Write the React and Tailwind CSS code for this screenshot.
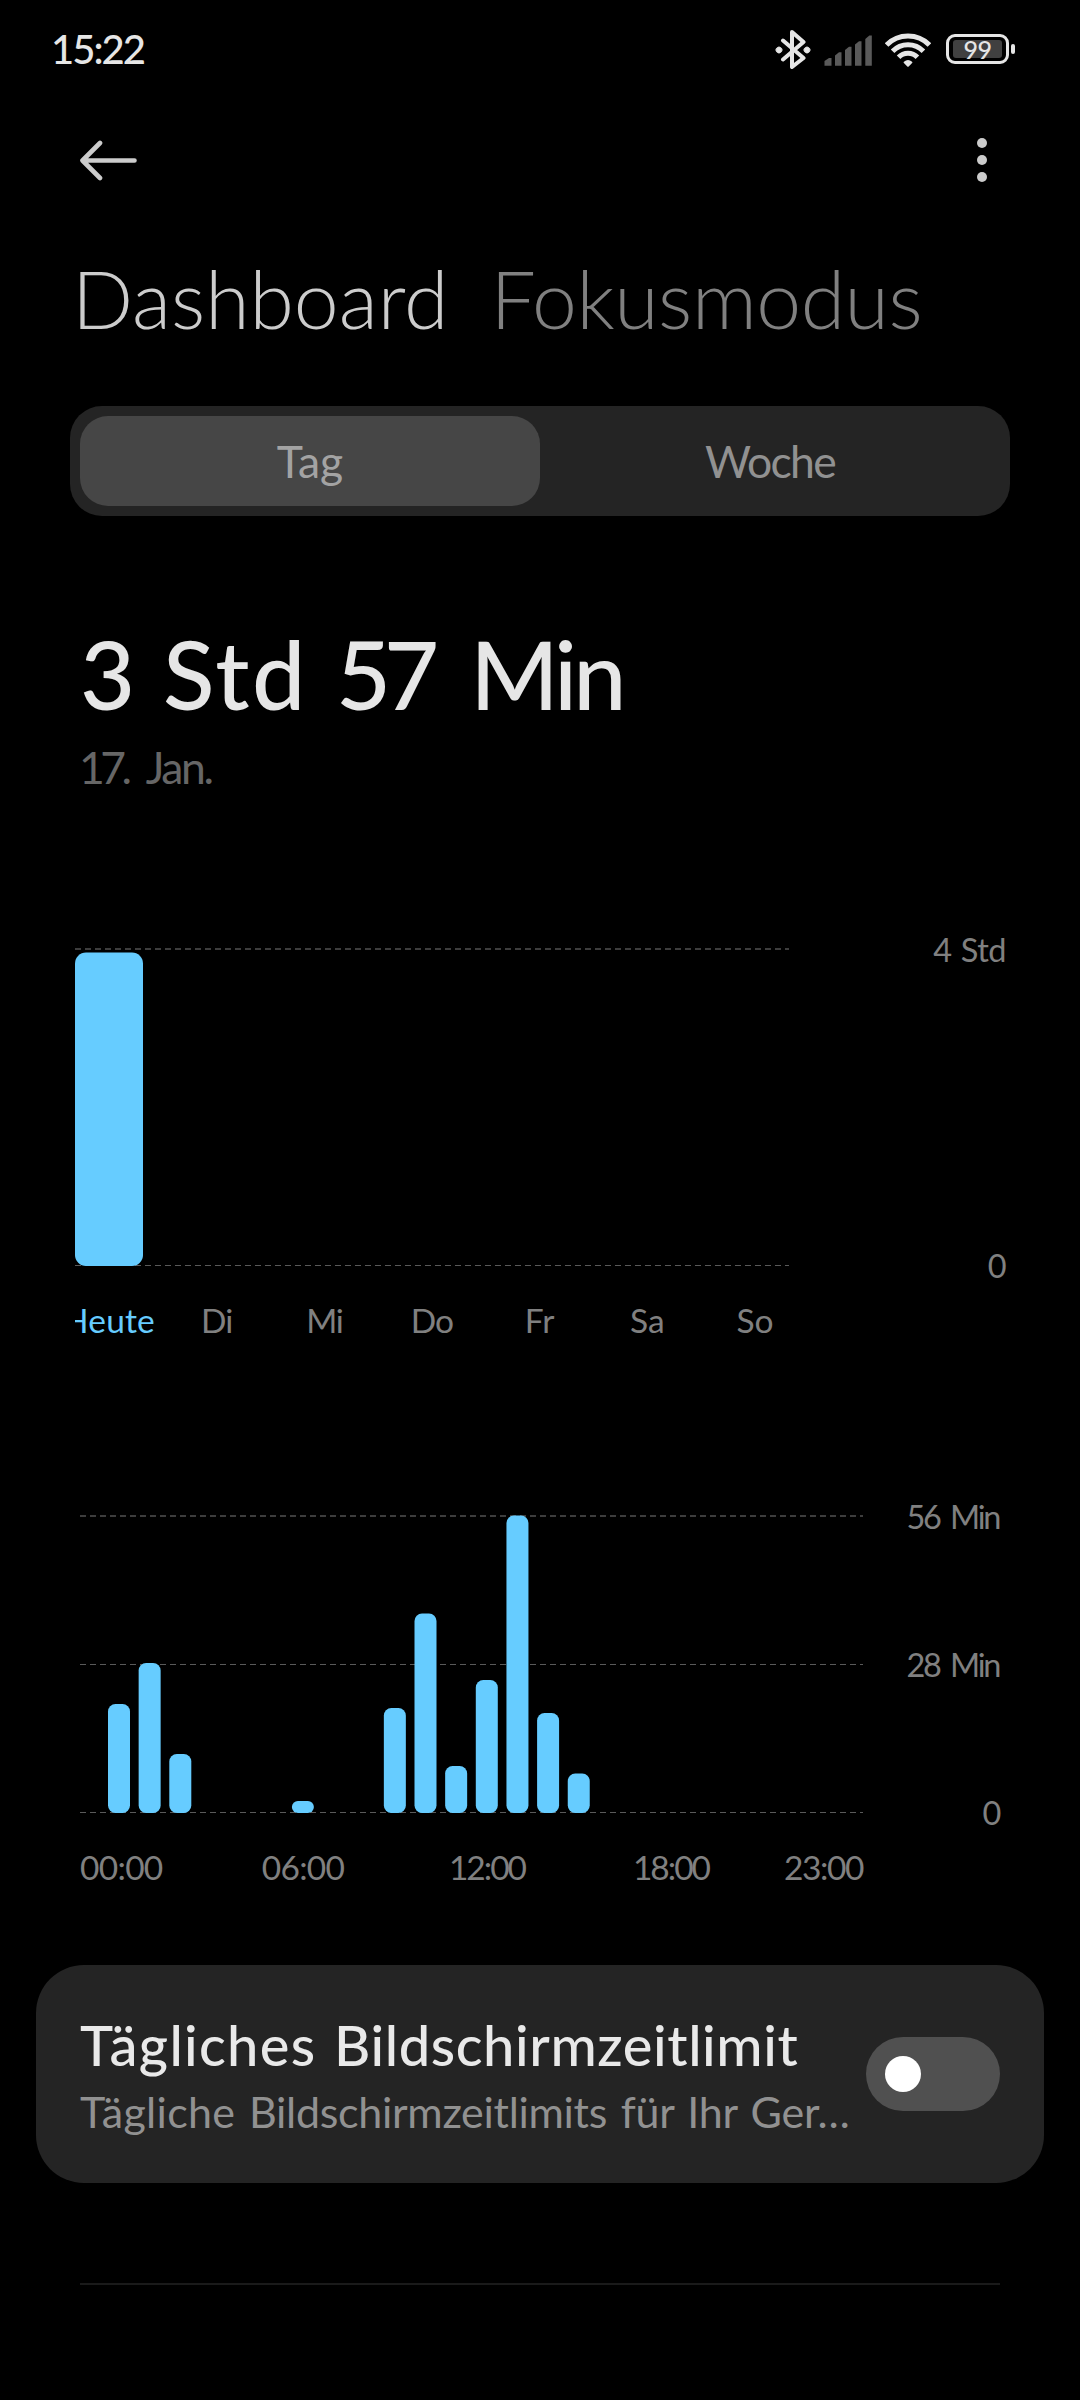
const days = [
  { label: 'Heute', className: 'text-[#66ccff] tracking-[0.16px]' },
  { label: 'Di', className: 'text-[#808080] tracking-[-1px]' },
  { label: 'Mi', className: 'text-[#808080] tracking-[-1.5px]' },
  { label: 'Do', className: 'text-[#808080] tracking-[-1px]' },
  { label: 'Fr', className: 'text-[#808080]' },
  { label: 'Sa', className: 'text-[#808080]' },
  { label: 'So', className: 'text-[#808080]' },
];

// height in px per hour of the day
const hours = [
  { hour: 0, height: 109 },
  { hour: 1, height: 150 },
  { hour: 2, height: 59 },
  { hour: 6, height: 12 },
  { hour: 9, height: 105 },
  { hour: 10, height: 199.5 },
  { hour: 11, height: 47 },
  { hour: 12, height: 133 },
  { hour: 13, height: 297.5 },
  { hour: 14, height: 100 },
  { hour: 15, height: 39.5 },
];

const BluetoothIcon = () => (
  <svg className="h-[40px] w-[36px]" viewBox="0 0 36 40" fill="none">
    <path
      d="M8 11.5 L28.5 29 L17 38 V3 L28.5 13 L8 30.5"
      stroke="#e6e6e6"
      strokeWidth="4"
      strokeLinecap="round"
      strokeLinejoin="round"
    />
    <rect x="1.4" y="18.4" width="5.2" height="5.2" rx="1.8" transform="rotate(45 4 21)" fill="#e6e6e6" stroke="#e6e6e6" />
    <rect x="29.4" y="18.4" width="5.2" height="5.2" rx="1.8" transform="rotate(45 32 21)" fill="#e6e6e6" stroke="#e6e6e6" />
  </svg>
);

const SignalIcon = () => (
  <svg className="h-[40px] w-[48px]" viewBox="0 0 48 40" fill="#5a5a5a">
    <path d="M0.5 32 L5 29 H7.5 V36.7 H0.5 Z" />
    <path d="M11 26.5 L15 23.3 H17.5 V36.7 H11 Z" />
    <path d="M21 21 L25 17.8 H27.5 V36.7 H21 Z" />
    <path d="M31 15.5 L35 12.2 H37.5 V36.7 H31 Z" />
    <path d="M41.3 10 L45.3 6.5 H47.8 V36.7 H41.3 Z" />
  </svg>
);

const WifiIcon = () => (
  <svg className="h-[40px] w-[46px]" viewBox="0 0 46 40" fill="none">
    <g stroke="#e6e6e6" strokeWidth="5">
      <path d="M1.6 16 A30 30 0 0 1 44.4 16" />
      <path d="M7.6 22.2 A21.5 21.5 0 0 1 38.4 22.2" />
      <path d="M13.6 28.2 A13 13 0 0 1 32.4 28.2" />
    </g>
    <path
      d="M19.6 33.4 Q23 30.6 26.4 33.4 L23 36.8 Z"
      fill="#e6e6e6"
      stroke="#e6e6e6"
      strokeWidth="2"
      strokeLinejoin="round"
    />
  </svg>
);

const Battery = () => (
  <div className="flex items-center gap-[2px]">
    <div className="flex h-[30px] w-[63px] items-center justify-center rounded-[9px] border-[3px] border-[#e6e6e6]">
      <div className="flex h-[18px] w-[49px] items-center justify-center rounded-[3px] bg-[#404040] text-[25px] leading-[18px] font-medium tracking-[-0.5px] text-[#e6e6e6]">
        99
      </div>
    </div>
    <div className="h-[10px] w-[4px] rounded-[2px] bg-[#e6e6e6]" />
  </div>
);

const StatusBar = () => (
  <div className="flex h-[98px] items-center justify-between pr-[65px] pl-[51px]">
    <span className="text-[40px] leading-none font-medium tracking-[-2px] text-[#e6e6e6]">15:22</span>
    <div className="flex items-center">
      <BluetoothIcon />
      <div className="ml-[13px]">
        <SignalIcon />
      </div>
      <div className="ml-[13px]">
        <WifiIcon />
      </div>
      <div className="ml-[15px]">
        <Battery />
      </div>
    </div>
  </div>
);

const Toolbar = () => (
  <div className="mb-[3px] flex h-[124px] items-center justify-between pr-[93px] pl-[79px]">
    <svg className="h-[41px] w-[60px]" viewBox="0 0 60 41" fill="none">
      <path
        d="M21 3 L3.5 20.5 L21 38 M4 20.5 H55.5"
        stroke="#cccccc"
        strokeWidth="4.6"
        strokeLinecap="round"
        strokeLinejoin="round"
      />
    </svg>
    <div className="flex flex-col gap-[7px]">
      <span className="size-[10px] rounded-full bg-[#cccccc]" />
      <span className="size-[10px] rounded-full bg-[#cccccc]" />
      <span className="size-[10px] rounded-full bg-[#cccccc]" />
    </div>
  </div>
);

const GridLine = ({ y, width, thin }) => (
  <line
    x1="0"
    x2={width}
    y1={y}
    y2={y}
    stroke={thin ? '#5a5a5a' : '#3d3d3d'}
    strokeWidth={thin ? 1 : 2}
    strokeDasharray="6 4"
  />
);

const WeekChart = () => (
  <section className="mt-[155px] pr-[74px] pl-[75px]">
    <div className="flex h-[318px] justify-between">
      <svg className="h-[318px] w-[714px]" viewBox="0 0 714 318">
        <GridLine y={1} width={714} />
        <GridLine y={317.5} width={714} thin />
        <rect x="0" y="4.5" width="68" height="313.5" rx="11" fill="#66ccff" />
      </svg>
      <div className="-mt-[18px] flex h-[356px] flex-col justify-between text-right text-[32.5px] leading-[40px] tracking-[-0.5px] text-[#808080] [word-spacing:1.4px]">
        <span>4 Std</span>
        <span>0</span>
      </div>
    </div>
    <div className="mt-[34px] flex w-[714px] justify-between overflow-hidden text-[33.5px] leading-[40px]">
      {days.map((day) => (
        <div key={day.label} className="flex w-[68px] justify-center">
          <span className={day.className}>{day.label}</span>
        </div>
      ))}
    </div>
  </section>
);

const DayChart = () => (
  <section className="mt-[175px] pr-[81px] pl-[80px]">
    <div className="flex h-[298px] justify-between">
      <svg className="h-[298px] w-[783px]" viewBox="0 0 783 298">
        <GridLine y={1} width={783} />
        <GridLine y={149.5} width={783} thin />
        <GridLine y={297.5} width={783} thin />
        {hours.map(({ hour, height }) => (
          <rect
            key={hour}
            x={28 + hour * 30.65}
            y={298 - height}
            width="22"
            height={height}
            rx={Math.min(7.5, height / 2)}
            fill="#66ccff"
          />
        ))}
      </svg>
      <div className="-mt-[18px] flex h-[336px] flex-col justify-between text-right text-[32.5px] leading-[40px] tracking-[-2.3px] text-[#808080] [word-spacing:4.5px]">
        <span>56 Min</span>
        <span>28 Min</span>
        <span>0</span>
      </div>
    </div>
    <div className="mt-[34px] grid w-[783px] grid-cols-[131px_184px_184px_184px_100px] text-center text-[33.5px] leading-[40px] text-[#808080]">
      <span className="text-left tracking-[-0.7px]">00:00</span>
      <span className="tracking-[-0.7px]">06:00</span>
      <span className="tracking-[-2px]">12:00</span>
      <span className="tracking-[-2px]">18:00</span>
      <span className="text-right tracking-[-1.4px]">23:00</span>
    </div>
  </section>
);

const LimitCard = () => (
  <section className="mx-[36px] mt-[78px] flex h-[218px] items-center justify-between rounded-[48px] bg-[#242424] pr-[44px] pl-[44px]">
    <div className="pt-[5px] whitespace-nowrap">
      <h2 className="text-[56px] leading-[70px] font-medium tracking-[0.6px] text-[#e9e9e9] [word-spacing:3px]">
        <span className="tracking-[1.3px]">Tägliches</span> Bildschirmzeitlimit
      </h2>
      <p className="text-[43px] leading-[64px] tracking-[-0.3px] text-[#919191] [word-spacing:3px]">
        <span className="tracking-[0.3px]">Tägliche</span> Bildschirmzeitlimits für Ihr Ger…
      </p>
    </div>
    <button className="flex h-[74px] w-[134px] shrink-0 items-center rounded-full bg-[#505050] pl-[19px]">
      <span className="size-[36px] rounded-full bg-white" />
    </button>
  </section>
);

export default function App() {
  return (
    <main className="h-[2400px] w-[1080px] overflow-hidden bg-black font-['Lato','Noto_Sans',sans-serif]">
      <StatusBar />
      <Toolbar />

      <nav className="flex h-[146px] items-center gap-[42px] pl-[72px] text-[80.5px] leading-none font-light">
        <span className="text-[#cccccc]">Dashboard</span>
        <span className="tracking-[-0.45px] text-[#808080]">Fokusmodus</span>
      </nav>

      <div className="mx-[70px] mt-[35px] flex h-[110px] rounded-[32px] bg-[#242424] p-[10px] text-[44.5px]">
        <div className="flex flex-1 items-center justify-center rounded-[28px] bg-[#464646] text-[#a3a3a3]">Tag</div>
        <div className="flex flex-1 items-center justify-center tracking-[-1.7px] text-[#919191]">Woche</div>
      </div>

      <h1 className="mt-[110px] flex pl-[80px] text-[95px] leading-[94px] font-medium text-[#e6e6e6]">
        <span>3</span>
        <span className="ml-[28px] tracking-[2.5px]">Std</span>
        <span className="ml-[28px] tracking-[-7px]">57</span>
        <span className="ml-[38px] tracking-[-4px]">Min</span>
      </h1>
      <p className="mt-[21px] flex pl-[79px] text-[44.5px] leading-[52px] text-[#666666]">
        <span className="tracking-[-4.5px]">17.</span>
        <span className="ml-[18px] tracking-[-2.3px]">Jan.</span>
      </p>

      <WeekChart />
      <DayChart />
      <LimitCard />

      <div className="mx-[80px] mt-[100px] h-[2px] bg-[#1a1a1a]" />
    </main>
  );
}
